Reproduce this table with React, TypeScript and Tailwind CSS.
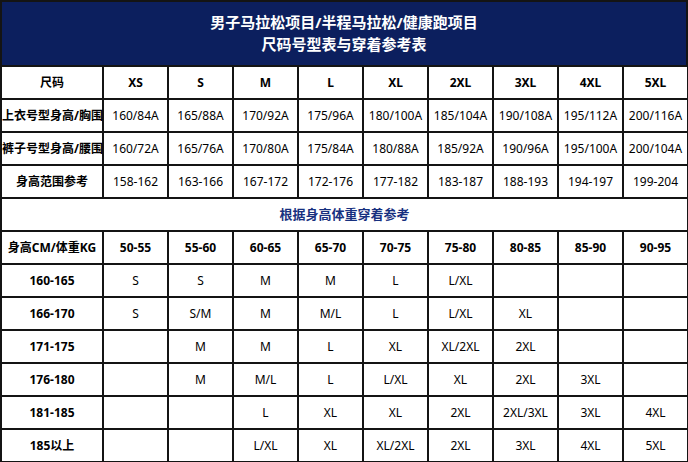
const sizes = ["XS", "S", "M", "L", "XL", "2XL", "3XL", "4XL", "5XL"];

const specRows: [string, string[]][] = [
  ["上衣号型身高/胸围", ["160/84A", "165/88A", "170/92A", "175/96A", "180/100A", "185/104A", "190/108A", "195/112A", "200/116A"]],
  ["裤子号型身高/腰围", ["160/72A", "165/76A", "170/80A", "175/84A", "180/88A", "185/92A", "190/96A", "195/100A", "200/104A"]],
  ["身高范围参考", ["158-162", "163-166", "167-172", "172-176", "177-182", "183-187", "188-193", "194-197", "199-204"]],
];

const weights = ["50-55", "55-60", "60-65", "65-70", "70-75", "75-80", "80-85", "85-90", "90-95"];

const fitRows: [string, string[]][] = [
  ["160-165", ["S", "S", "M", "M", "L", "L/XL", "", "", ""]],
  ["166-170", ["S", "S/M", "M", "M/L", "L", "L/XL", "XL", "", ""]],
  ["171-175", ["", "M", "M", "L", "XL", "XL/2XL", "2XL", "", ""]],
  ["176-180", ["", "M", "M/L", "L", "L/XL", "XL", "2XL", "3XL", ""]],
  ["181-185", ["", "", "L", "XL", "XL", "2XL", "2XL/3XL", "3XL", "4XL"]],
  ["185以上", ["", "", "L/XL", "XL", "XL/2XL", "2XL", "3XL", "4XL", "5XL"]],
];

const cell =
  "h-[33px] border-2 border-[#141414] p-0 text-center align-middle whitespace-nowrap leading-none";

export default function App() {
  return (
    <div
      className="w-[688px] h-[462px] overflow-hidden bg-white text-black"
      style={{ fontFamily: '"Noto Sans", "Noto Sans CJK SC", sans-serif' }}
    >
      <div className="flex h-[65px] flex-col items-center justify-center border-2 border-b-0 border-[#141414] bg-[#0c1f5e] pb-[2px] text-[15px] font-bold leading-[22px] text-white">
        <div>男子马拉松项目/半程马拉松/健康跑项目</div>
        <div>尺码号型表与穿着参考表</div>
      </div>
      <table className="w-[688px] table-fixed border-collapse text-[12px]">
        <colgroup>
          <col className="w-[102px]" />
          {sizes.map((s) => (
            <col key={s} className="w-[65px]" />
          ))}
        </colgroup>
        <tbody>
          <tr className="font-bold">
            <td className={cell}>尺码</td>
            {sizes.map((s) => (
              <td key={s} className={cell}>
                {s}
              </td>
            ))}
          </tr>
          {specRows.map(([label, vals]) => (
            <tr key={label}>
              <td className={`${cell} font-bold`}>{label}</td>
              {vals.map((v, i) => (
                <td key={i} className={cell}>
                  {v}
                </td>
              ))}
            </tr>
          ))}
          <tr>
            <td colSpan={10} className={`${cell} text-[13px] font-bold text-[#17307f]`}>
              根据身高体重穿着参考
            </td>
          </tr>
          <tr className="font-bold">
            <td className={cell}>身高CM/体重KG</td>
            {weights.map((w) => (
              <td key={w} className={cell}>
                {w}
              </td>
            ))}
          </tr>
          {fitRows.map(([label, vals]) => (
            <tr key={label}>
              <td className={`${cell} font-bold`}>{label}</td>
              {vals.map((v, i) => (
                <td key={i} className={cell}>
                  {v}
                </td>
              ))}
            </tr>
          ))}
        </tbody>
      </table>
    </div>
  );
}
